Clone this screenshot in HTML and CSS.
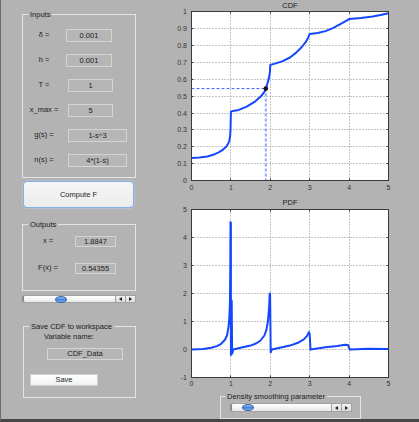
FILE: index.html
```html
<!DOCTYPE html>
<html>
<head>
<meta charset="utf-8">
<link rel="stylesheet" href="styles.css">
</head>
<body>
<div class="window">
  <div class="controls">
    <fieldset class="group inputs">
      <legend>Inputs</legend>
      <div class="param-grid">
        <span class="lbl">δ =</span><span class="field w-a">0.001</span>
        <span class="lbl">h =</span><span class="field w-a">0.001</span>
        <span class="lbl">T =</span><span class="field w-b">1</span>
        <span class="lbl">x_max =</span><span class="field w-b">5</span>
        <span class="lbl">g(s) =</span><span class="field w-c">1-s^3</span>
        <span class="lbl">n(s) =</span><span class="field w-c">4*(1-s)</span>
      </div>
    </fieldset>
    <button class="compute">Compute F</button>
    <fieldset class="group outputs">
      <legend>Outputs</legend>
      <div class="out-grid">
        <span class="lbl">x =</span><span class="field small">1.8847</span>
        <span class="lbl">F(x) =</span><span class="field small">0.54355</span>
      </div>
    </fieldset>
    <div class="slider out-slider">
      <div class="track"><span class="thumb"></span></div>
      <span class="arrow left"></span><span class="arrow right"></span>
    </div>
    <fieldset class="group save">
      <legend>Save CDF to workspace</legend>
      <div class="var-label">Variable name:</div>
      <div class="field var-field">CDF_Data</div>
      <button class="save-btn">Save</button>
    </fieldset>
  </div>
  <div class="figure">
    <svg class="plots" width="269" height="392" viewBox="0 0 269 392" xmlns="http://www.w3.org/2000/svg">
      <defs>
        <clipPath id="c1"><rect x="41.5" y="11.5" width="197" height="169"/></clipPath>
        <clipPath id="c2"><rect x="41.5" y="209.5" width="197" height="168"/></clipPath>
      </defs>
      <!-- CDF axes -->
      <text class="title" x="140" y="8">CDF</text>
      <rect x="41.5" y="11.5" width="197" height="169" fill="#fff"/>
      <path class="grid" d="M80.5 11.5V180.5M120.5 11.5V180.5M159.5 11.5V180.5M199.5 11.5V180.5M41.5 163.5H238.5M41.5 146.5H238.5M41.5 129.5H238.5M41.5 113.5H238.5M41.5 96.5H238.5M41.5 79.5H238.5M41.5 62.5H238.5M41.5 45.5H238.5M41.5 28.5H238.5"/>
      <path class="tick" d="M80.5 180.5v-2M120.5 180.5v-2M159.5 180.5v-2M199.5 180.5v-2M80.5 11.5v2M120.5 11.5v2M159.5 11.5v2M199.5 11.5v2M41.5 163.5h2M41.5 146.5h2M41.5 129.5h2M41.5 113.5h2M41.5 96.5h2M41.5 79.5h2M41.5 62.5h2M41.5 45.5h2M41.5 28.5h2M238.5 163.5h-2M238.5 146.5h-2M238.5 129.5h-2M238.5 113.5h-2M238.5 96.5h-2M238.5 79.5h-2M238.5 62.5h-2M238.5 45.5h-2M238.5 28.5h-2"/>
      <g clip-path="url(#c1)">
        <line class="dash-h" x1="41.5" y1="88.6" x2="115.8" y2="88.6"/>
        <line class="dash-v" x1="115.8" y1="88.6" x2="115.8" y2="180.5"/>
        <polyline class="curve" points="41.5,157.9 49.4,157.5 57.3,156.5 63.2,154.8 69.1,152.1 73,149.6 76.2,146.7 78.1,143.7 79.3,140.8 80.1,136.6 80.5,129.8 80.9,111.7 82.9,110.9 88.8,109.9 96.7,106.6 104.5,101.9 110.5,96.8 114.4,91.8 115.8,88.6 117.5,83.3 118.7,79.1 119.9,72.3 120.3,64.9 124.2,63.9 132.1,61.4 140,57.5 145.9,52.9 151.8,47 155.8,41.9 158.1,37.7 159.7,34.1 167.6,33 175.5,31.1 183.3,27.9 191.2,23.7 195.2,21.3 199.1,19.1 210.9,17.9 222.7,16.4 230.6,14.9 238.5,13.2"/>
        <circle cx="115.8" cy="88.6" r="2.3" fill="#111"/>
      </g>
      <rect class="box" x="41.5" y="11.5" width="197" height="169"/>
      <g class="ylab">
        <text x="37" y="183">0</text><text x="37" y="166">0.1</text><text x="37" y="149">0.2</text><text x="37" y="132">0.3</text><text x="37" y="115.5">0.4</text><text x="37" y="98.5">0.5</text><text x="37" y="81.5">0.6</text><text x="37" y="64.5">0.7</text><text x="37" y="48">0.8</text><text x="37" y="31">0.9</text><text x="37" y="14">1</text>
      </g>
      <g class="xlab">
        <text x="41.5" y="189.5">0</text><text x="80.9" y="189.5">1</text><text x="120.3" y="189.5">2</text><text x="159.7" y="189.5">3</text><text x="199.1" y="189.5">4</text><text x="238.5" y="189.5">5</text>
      </g>

      <!-- PDF axes -->
      <text class="title" x="140" y="205">PDF</text>
      <rect x="41.5" y="209.5" width="197" height="168" fill="#fff"/>
      <path class="grid" d="M80.5 209.5V377.5M120.5 209.5V377.5M159.5 209.5V377.5M199.5 209.5V377.5M41.5 237.5H238.5M41.5 265.5H238.5M41.5 293.5H238.5M41.5 321.5H238.5M41.5 349.5H238.5"/>
      <path class="tick" d="M80.5 377.5v-2M120.5 377.5v-2M159.5 377.5v-2M199.5 377.5v-2M80.5 209.5v2M120.5 209.5v2M159.5 209.5v2M199.5 209.5v2M41.5 237.5h2M41.5 265.5h2M41.5 293.5h2M41.5 321.5h2M41.5 349.5h2M238.5 237.5h-2M238.5 265.5h-2M238.5 293.5h-2M238.5 321.5h-2M238.5 349.5h-2"/>
      <g clip-path="url(#c2)">
        <polyline class="curve" points="41.5,349.5 53.3,348.9 61.2,347.8 67.1,346.1 71.1,343.9 75,339.7 77,335.5 78.5,327.1 79.3,318.7 79.9,304.7 80.3,265.5 80.5,222.1 80.9,223.5 80.9,355.1 81.7,300.5 82.1,353.7 83.3,349.5 92.7,347.3 100.6,345.6 106.5,343.3 110.5,340.5 114.4,335.5 116.4,329.9 117.9,321.5 119.1,307.5 119.7,293.5 120.1,293.5 120.7,352.3 121.9,349.5 132.1,347.3 140,345.6 147.9,342.8 153.8,339.4 156.9,336.1 158.9,332.1 159.7,334.1 160.5,349.5 175.5,347.3 187.3,345.9 195.2,344.7 197.9,345 199.9,349.5 218.8,348.7 238.5,348.9"/>
      </g>
      <rect class="box" x="41.5" y="209.5" width="197" height="168"/>
      <g class="ylab">
        <text x="37" y="212">5</text><text x="37" y="240">4</text><text x="37" y="268">3</text><text x="37" y="296">2</text><text x="37" y="324">1</text><text x="37" y="352">0</text><text x="37" y="380">-1</text>
      </g>
      <g class="xlab">
        <text x="41.5" y="385.5">0</text><text x="80.9" y="385.5">1</text><text x="120.3" y="385.5">2</text><text x="159.7" y="385.5">3</text><text x="199.1" y="385.5">4</text><text x="238.5" y="385.5">5</text>
      </g>
    </svg>
    <fieldset class="group density">
      <legend>Density smoothing parameter</legend>
      <div class="slider den-slider">
        <div class="track"><span class="thumb"></span></div>
        <span class="arrow left"></span><span class="arrow right"></span>
      </div>
    </fieldset>
  </div>
</div>
</body>
</html>
```

FILE: styles.css
```css
html, body {
  margin: 0;
  padding: 0;
}
body {
  background: #b3b3b3;
  font-family: "Liberation Sans", Arial, sans-serif;
  font-size: 7.5px;
  color: #1c1c1c;
  overflow: hidden;
  width: 419px;
  height: 422px;
}
.window {
  display: flex;
  width: 418px;
  height: 419px;
  border-left: 1px solid #6e6e6e;
  border-bottom: 3px solid #474747;
}
.controls {
  width: 149px;
  flex: none;
  box-sizing: border-box;
  padding: 10px 0 0 21px;
  display: flex;
  flex-direction: column;
  align-items: flex-start;
}
.group {
  margin: 0;
  padding: 0;
  min-width: 0;
  border: 1px solid #e4e4e4;
  box-sizing: border-box;
}
.group legend {
  padding: 0 2px;
  margin-left: 5px;
  line-height: 9px;
  font-size: 7.5px;
}
.group.inputs {
  width: 114px;
  padding: 10px 0 10px 0;
}
.param-grid {
  display: grid;
  grid-template-columns: 42px auto;
  grid-auto-rows: 13px;
  row-gap: 12px;
  align-items: start;
  justify-items: start;
}
.lbl {
  justify-self: center;
  line-height: 9px;
  margin-top: 1px;
}
.field {
  box-sizing: border-box;
  height: 13px;
  line-height: 11px;
  border: 1px solid #d4d4d4;
  background: #b6b6b6;
  text-align: center;
}
.w-a { width: 46px; margin-left: 1px; }
.w-b { width: 45px; margin-left: 3px; }
.w-c { width: 59px; margin-left: 3px; }

.compute {
  margin: 3px 0 0 1px;
  width: 111px;
  height: 27px;
  padding: 0;
  font: inherit;
  color: inherit;
  background: linear-gradient(#f6f6f6, #ececec);
  border: 1.5px solid #82aee4;
  border-radius: 4px;
  box-shadow: 0 0 0 0.5px #b7cfee;
}
.group.outputs {
  margin-top: 12px;
  width: 114px;
  padding: 7px 0 16px;
}
.out-grid {
  display: grid;
  grid-template-columns: 50px 41px;
  grid-auto-rows: 11px;
  row-gap: 16px;
  justify-items: start;
}
.out-grid .lbl { margin-top: 0; }
.field.small {
  height: 11px;
  line-height: 9px;
  width: 41px;
  margin-left: 2px;
}
.slider {
  display: flex;
  box-sizing: border-box;
}
.track {
  flex: 1;
  display: flex;
  align-items: center;
  box-sizing: border-box;
  background: linear-gradient(#ffffff, #e8e8e8);
  border: 1px solid #a2a2a2;
  border-left: 2px solid #8a8a8a;
  border-radius: 3px 0 0 3px;
}
.thumb {
  width: 12px;
  height: 7px;
  box-sizing: border-box;
  border-radius: 50%;
  background: linear-gradient(#9cc3f1, #3f7fd6 55%, #7fb0ec);
  border: 1px solid #3563ad;
}
.arrow {
  width: 10px;
  flex: none;
  display: flex;
  align-items: center;
  justify-content: center;
  box-sizing: border-box;
  background: linear-gradient(#f2f2f2, #dcdcdc);
  border: 1px solid #a2a2a2;
  border-left: none;
}
.arrow::before {
  content: "";
  border-style: solid;
}
.arrow.left::before {
  border-width: 2px 3px 2px 0;
  border-color: transparent #222 transparent transparent;
}
.arrow.right::before {
  border-width: 2px 0 2px 3px;
  border-color: transparent transparent transparent #222;
}
.out-slider {
  margin-top: 4px;
  width: 114px;
  height: 8px;
}
.out-slider .track { padding-left: 31px; }

.group.save {
  margin: 19px 0 0 1px;
  width: 113px;
  padding: 1px 0 11px;
}
.var-label {
  margin-left: 20px;
  line-height: 9px;
}
.var-field {
  margin: 7px 0 0 23px;
  width: 76px;
  height: 12px;
  line-height: 10px;
}
.save-btn {
  display: block;
  margin: 14px 0 0 6px;
  width: 68px;
  height: 12px;
  padding: 0;
  font: inherit;
  color: inherit;
  line-height: 10px;
  background: linear-gradient(#ffffff, #f1f1f1);
  border: 1px solid #cfcfcf;
  border-radius: 0;
}

.figure {
  width: 269px;
  flex: none;
  display: flex;
  flex-direction: column;
  align-items: flex-start;
}
.plots {
  display: block;
  flex: none;
}
.plots text {
  font-family: "Liberation Sans", Arial, sans-serif;
  font-size: 7px;
  fill: #333;
}
.plots .title {
  text-anchor: middle;
  font-size: 7.5px;
  fill: #222;
}
.plots .ylab text { text-anchor: end; }
.plots .xlab text { text-anchor: middle; }
.grid {
  fill: none;
  stroke: #8a8a8a;
  stroke-width: 1;
  stroke-dasharray: 1 2;
}
.tick {
  fill: none;
  stroke: #333;
  stroke-width: 1;
}
.box {
  fill: none;
  stroke: #3a3a3a;
  stroke-width: 1;
}
.curve {
  fill: none;
  stroke: #1446ff;
  stroke-width: 2;
  stroke-linejoin: round;
  stroke-linecap: round;
}
.dash-h {
  stroke: #3a5cff;
  stroke-width: 1;
  stroke-dasharray: 3 2;
}
.dash-v {
  stroke: #8ea6ff;
  stroke-width: 2;
  stroke-dasharray: 3 2;
}
.group.density {
  margin-left: 70px;
  width: 141px;
  padding: 2px 0 6px;
  flex: none;
}
.density legend { margin-left: 4px; }
.den-slider {
  margin-left: 9px;
  width: 122px;
  height: 9px;
}
.den-slider .track { padding-left: 10px; }
```
